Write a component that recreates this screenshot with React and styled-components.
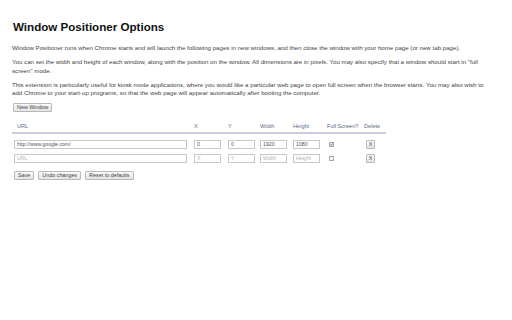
import React from "react";
import styled, { createGlobalStyle } from "styled-components";

const GlobalStyle = createGlobalStyle`
  html, body {
    margin: 0;
    background: #fff;
  }
  body {
    font-family: "Liberation Sans", Arial, sans-serif;
    color: #333;
  }
`;

const windows = [
  { url: "http://www.google.com/", x: "0", y: "0", width: "1920", height: "1080", full: true },
  { url: "", x: "", y: "", width: "", height: "", full: false },
];

const App = () => (
  <Page>
    <GlobalStyle />
    <Title>Window Positioner Options</Title>
    <Para $first>
      Window Positioner runs when Chrome starts and will launch the following pages in new
      windows, and then close the window with your home page (or new tab page).
    </Para>
    <Para>
      You can set the width and height of each window, along with the position on the window.
      All dimensions are in pixels. You may also specify that a window should start in "full
      screen" mode.
    </Para>
    <Para>
      This extension is particularly useful for kiosk mode applications, where you would like a
      particular web page to open full screen when the browser starts. You may also wish to add
      Chrome to your start-up programs, so that the web page will appear automatically after
      booting the computer.
    </Para>
    <NewWindow>New Window</NewWindow>

    <Table>
      <HeadRow>
        <HeadCell $pad>URL</HeadCell>
        <HeadCell>X</HeadCell>
        <HeadCell>Y</HeadCell>
        <HeadCell>Width</HeadCell>
        <HeadCell>Height</HeadCell>
        <HeadCell>Full Screen?</HeadCell>
        <HeadCell>Delete</HeadCell>
      </HeadRow>
      {windows.map((w, i) => (
        <Row key={i}>
          <Field $wide defaultValue={w.url} placeholder="URL" />
          <Field defaultValue={w.x} placeholder="X" />
          <Field defaultValue={w.y} placeholder="Y" />
          <Field defaultValue={w.width} placeholder="Width" />
          <Field defaultValue={w.height} placeholder="Height" />
          <CheckCell>
            <Check>
              {w.full && (
                <svg width="5" height="5" viewBox="0 0 10 10">
                  <path d="M1.5 5.5 L4 8 L8.5 1.5" fill="none" stroke="#222" strokeWidth="2" />
                </svg>
              )}
            </Check>
          </CheckCell>
          <DeleteCell>
            <SmallButton>X</SmallButton>
          </DeleteCell>
        </Row>
      ))}
    </Table>

    <Actions>
      <Button>Save</Button>
      <Button>Undo changes</Button>
      <Button>Reset to defaults</Button>
    </Actions>
  </Page>
);

const Page = styled.div`
  padding: 20px 12px 0 12px;
  width: 480px;
`;

const Title = styled.h1`
  margin: 0 0 0 1px;
  font-size: 11.6px;
  line-height: 14px;
  font-weight: bold;
  color: #111;
`;

const Para = styled.p`
  margin: ${(p) => (p.$first ? "10px" : "5.5px")} 0 0 0;
  font-size: 6.15px;
  line-height: 8.5px;
  color: #444;
`;

const Button = styled.button`
  display: inline-block;
  margin: 0;
  padding: 0 3px;
  height: 9px;
  font-family: "Liberation Sans", Arial, sans-serif;
  font-size: 5.4px;
  line-height: 7px;
  color: #444;
  background: linear-gradient(#fafafa, #e4e4e4);
  border: 1px solid #b8b8b8;
  border-radius: 1px;
`;

const NewWindow = styled(Button)`
  display: block;
  margin: 5px 0 0 1px;
`;

const Table = styled.div`
  margin-top: 8.5px;
  width: 374px;
`;

const grid = `
  display: grid;
  grid-template-columns: 180px 34px 32px 33px 34px 37px 22px;
  align-items: center;
  padding-left: 2px;
`;

const HeadRow = styled.div`
  ${grid}
  height: 12px;
  border-bottom: 2px solid #c9cbe0;
  margin-bottom: 3px;
`;

const HeadCell = styled.div`
  font-size: 5.6px;
  color: #5a6a8a;
  padding-left: ${(p) => (p.$pad ? "3px" : "0")};
`;

const Row = styled.div`
  ${grid}
  height: 14px;
`;

const Field = styled.input`
  box-sizing: border-box;
  width: ${(p) => (p.$wide ? "173px" : "27px")};
  height: 9px;
  margin: 0;
  padding: 0 2px;
  border: 1px solid #c8c8c8;
  font-family: "Liberation Sans", Arial, sans-serif;
  font-size: 5.2px;
  color: #555;
  background: #fff;

  &::placeholder {
    color: #b5b5b5;
  }
`;

const CheckCell = styled.div`
  padding-left: 2px;
  display: flex;
`;

const Check = styled.span`
  box-sizing: border-box;
  width: 5px;
  height: 5px;
  border: 1px solid #a8a8a8;
  background: #f4f4f4;
  display: flex;
  align-items: center;
  justify-content: center;
  svg {
    display: block;
  }
`;

const DeleteCell = styled.div`
  padding-left: 2px;
  display: flex;
`;

const SmallButton = styled(Button)`
  width: 9px;
  padding: 0;
`;

const Actions = styled.div`
  display: flex;
  gap: 4px;
  margin-top: 6px;
  margin-left: 2px;
`;

export default App;
